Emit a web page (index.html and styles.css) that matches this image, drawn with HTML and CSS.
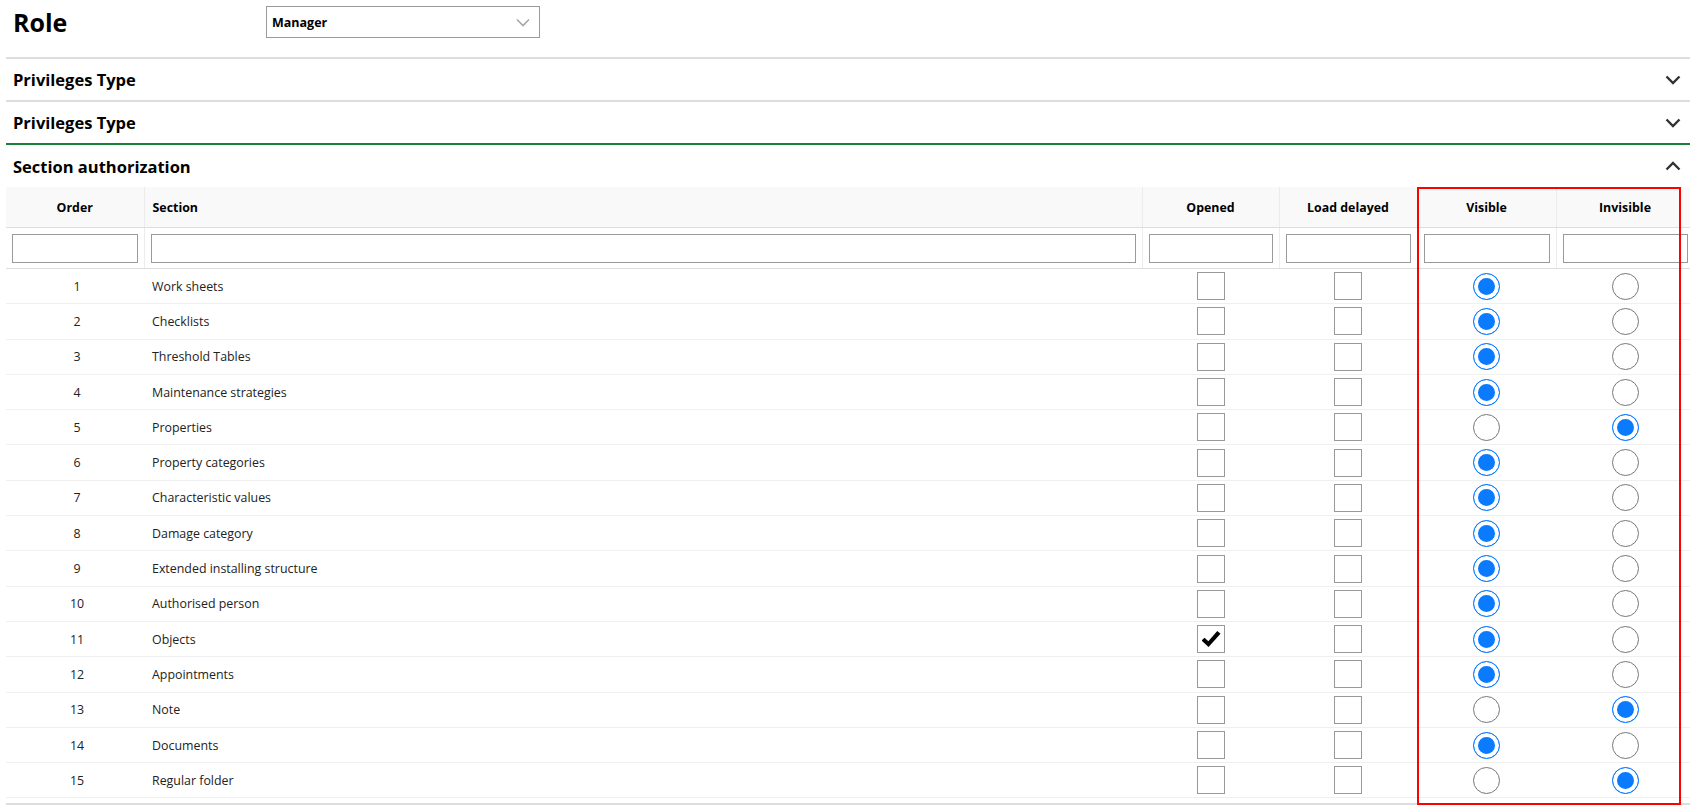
FILE: index.html
```html
<!DOCTYPE html>
<html lang="en">
<head>
    <meta charset="UTF-8">
    <meta name="viewport" content="width=device-width, initial-scale=1.0">
    <title>Role privileges</title>
    <link rel="stylesheet" href="styles.css">
</head>
<body>
<div class="page">

    <div class="role-bar">
        <h1>Role</h1>
        <div class="role-select">
            <span>Manager</span>
            <svg class="select-arrow" width="14" height="9" viewBox="0 0 14 9"><path d="M1 1.5 L7 7.5 L13 1.5" fill="none" stroke="#a6a6a6" stroke-width="1.6"/></svg>
        </div>
    </div>

    <div class="panel">
        <div class="panel-head">
            <span>Privileges Type</span>
            <svg class="chevron" width="16" height="10" viewBox="0 0 16 10"><path d="M1.5 1.5 L8 8 L14.5 1.5" fill="none" stroke="#333" stroke-width="2.4"/></svg>
        </div>
    </div>

    <div class="panel">
        <div class="panel-head">
            <span>Privileges Type</span>
            <svg class="chevron" width="16" height="10" viewBox="0 0 16 10"><path d="M1.5 1.5 L8 8 L14.5 1.5" fill="none" stroke="#333" stroke-width="2.4"/></svg>
        </div>
    </div>

    <div class="panel open">
        <div class="panel-head">
            <span>Section authorization</span>
            <svg class="chevron" width="16" height="10" viewBox="0 0 16 10"><path d="M1.5 8.5 L8 2 L14.5 8.5" fill="none" stroke="#333" stroke-width="2.4"/></svg>
        </div>

        <div class="table-wrap">
            <table class="grid">
                <colgroup>
                    <col class="col-order">
                    <col class="col-section">
                    <col class="col-opened">
                    <col class="col-delayed">
                    <col class="col-visible">
                    <col class="col-invisible">
                </colgroup>
                <thead>
                    <tr class="head-row">
                        <th>Order</th>
                        <th class="left">Section</th>
                        <th>Opened</th>
                        <th>Load delayed</th>
                        <th>Visible</th>
                        <th>Invisible</th>
                    </tr>
                    <tr class="filter-row">
                        <th><input type="text" class="filter"></th>
                        <th><input type="text" class="filter"></th>
                        <th><input type="text" class="filter"></th>
                        <th><input type="text" class="filter"></th>
                        <th><input type="text" class="filter"></th>
                        <th><input type="text" class="filter"></th>
                    </tr>
                </thead>
                <tbody>
                    <tr><td class="num">1</td><td>Work sheets</td><td><input type="checkbox"></td><td><input type="checkbox"></td><td><input type="radio" name="r1" checked></td><td><input type="radio" name="r1"></td></tr>
                    <tr><td class="num">2</td><td>Checklists</td><td><input type="checkbox"></td><td><input type="checkbox"></td><td><input type="radio" name="r2" checked></td><td><input type="radio" name="r2"></td></tr>
                    <tr><td class="num">3</td><td>Threshold Tables</td><td><input type="checkbox"></td><td><input type="checkbox"></td><td><input type="radio" name="r3" checked></td><td><input type="radio" name="r3"></td></tr>
                    <tr><td class="num">4</td><td>Maintenance strategies</td><td><input type="checkbox"></td><td><input type="checkbox"></td><td><input type="radio" name="r4" checked></td><td><input type="radio" name="r4"></td></tr>
                    <tr><td class="num">5</td><td>Properties</td><td><input type="checkbox"></td><td><input type="checkbox"></td><td><input type="radio" name="r5"></td><td><input type="radio" name="r5" checked></td></tr>
                    <tr><td class="num">6</td><td>Property categories</td><td><input type="checkbox"></td><td><input type="checkbox"></td><td><input type="radio" name="r6" checked></td><td><input type="radio" name="r6"></td></tr>
                    <tr><td class="num">7</td><td>Characteristic values</td><td><input type="checkbox"></td><td><input type="checkbox"></td><td><input type="radio" name="r7" checked></td><td><input type="radio" name="r7"></td></tr>
                    <tr><td class="num">8</td><td>Damage category</td><td><input type="checkbox"></td><td><input type="checkbox"></td><td><input type="radio" name="r8" checked></td><td><input type="radio" name="r8"></td></tr>
                    <tr><td class="num">9</td><td>Extended installing structure</td><td><input type="checkbox"></td><td><input type="checkbox"></td><td><input type="radio" name="r9" checked></td><td><input type="radio" name="r9"></td></tr>
                    <tr><td class="num">10</td><td>Authorised person</td><td><input type="checkbox"></td><td><input type="checkbox"></td><td><input type="radio" name="r10" checked></td><td><input type="radio" name="r10"></td></tr>
                    <tr><td class="num">11</td><td>Objects</td><td><input type="checkbox" checked></td><td><input type="checkbox"></td><td><input type="radio" name="r11" checked></td><td><input type="radio" name="r11"></td></tr>
                    <tr><td class="num">12</td><td>Appointments</td><td><input type="checkbox"></td><td><input type="checkbox"></td><td><input type="radio" name="r12" checked></td><td><input type="radio" name="r12"></td></tr>
                    <tr><td class="num">13</td><td>Note</td><td><input type="checkbox"></td><td><input type="checkbox"></td><td><input type="radio" name="r13"></td><td><input type="radio" name="r13" checked></td></tr>
                    <tr><td class="num">14</td><td>Documents</td><td><input type="checkbox"></td><td><input type="checkbox"></td><td><input type="radio" name="r14" checked></td><td><input type="radio" name="r14"></td></tr>
                    <tr><td class="num">15</td><td>Regular folder</td><td><input type="checkbox"></td><td><input type="checkbox"></td><td><input type="radio" name="r15"></td><td><input type="radio" name="r15" checked></td></tr>
                </tbody>
            </table>
        </div>

        <!-- markierung der sichtbarkeits-spalten -->
        <div class="highlight"></div>
    </div>

</div>
</body>
</html>
```

FILE: styles.css
```css
html, body {
    overflow: hidden;
}
body {
    margin: 0;
    font-family: "Open Sans", "Noto Sans", sans-serif;
    color: #222;
    background-color: #fff;
}
.page {
    padding-left: 6px;
}
.role-bar {
    display: flex;
    align-items: center;
    padding: 6px 0 19px;
}
.role-bar h1 {
    margin: 0;
    width: 260px;
    padding-left: 7px;
    box-sizing: border-box;
    font-size: 25px;
    line-height: 32px;
    font-weight: 700;
    color: #000;
}
.role-select {
    width: 274px;
    height: 32px;
    box-sizing: border-box;
    border: 1px solid #9a9a9a;
    display: flex;
    align-items: center;
    justify-content: space-between;
    padding: 0 9px 0 5px;
    font-size: 12.5px;
    font-weight: 700;
    color: #000;
}
.panel {
    border-top: 2px solid #ddd;
}
.panel.open {
    position: relative;
    border-top-color: #198038;
    border-bottom: 2px solid #ddd;
}
.panel-head {
    height: 41px;
    display: flex;
    align-items: center;
    justify-content: space-between;
    padding: 0 9px 0 7px;
    font-size: 16.5px;
    font-weight: 700;
    color: #000;
}
.panel.open .panel-head {
    height: 42px;
}
.table-wrap {
    overflow: hidden;
    padding-bottom: 5px;
}
.grid {
    width: 1688px;
    border-collapse: collapse;
    table-layout: fixed;
    font-size: 12.4px;
}
.col-order { width: 138px; }
.col-section { width: 998px; }
.col-opened { width: 137px; }
.col-delayed { width: 138px; }
.col-visible { width: 139px; }
.col-invisible { width: 138px; }
.grid th {
    background-color: #f9f9f9;
    font-weight: 700;
    color: #000;
    text-align: center;
    border-right: 1px solid #ececec;
    border-bottom: 1px solid #ddd;
    padding: 0 6px;
}
.grid th.left {
    text-align: left;
    padding-left: 8px;
}
.head-row th {
    height: 40px;
}
.filter-row th {
    height: 40px;
    background-color: #fff;
}
.filter {
    display: block;
    width: 100%;
    height: 29px;
    box-sizing: border-box;
    border: 1px solid #9a9a9a;
    margin: 1px 0 0;
    font-family: inherit;
}
.grid td {
    height: 34.3px;
    padding: 0 8px;
    border-bottom: 1px solid #f0f0f0;
    color: #222;
    text-align: center;
}
.grid td:nth-child(2) {
    text-align: left;
}
.grid td.num {
    padding-left: 12px;
}
.grid input[type="checkbox"],
.grid input[type="radio"] {
    appearance: none;
    -webkit-appearance: none;
    margin: 0;
    vertical-align: middle;
    box-sizing: border-box;
}
.grid input[type="checkbox"] {
    width: 28px;
    height: 28px;
    border: 1px solid #999;
    background-color: #fff;
    position: relative;
}
.grid input[type="checkbox"]:checked::before {
    content: "";
    position: absolute;
    left: 4px;
    top: 5px;
    width: 19px;
    height: 16px;
    background-color: #000;
    clip-path: polygon(0 58%, 16% 42%, 36% 64%, 83% 0, 100% 16%, 37% 100%);
}
.grid input[type="radio"] {
    width: 27px;
    height: 27px;
    border: 1px solid #777;
    border-radius: 50%;
    background-color: #fff;
}
.grid input[type="radio"]:checked {
    border-color: #0a7aff;
    background-color: #0a7aff;
    box-shadow: inset 0 0 0 4px #fff;
}
.highlight {
    position: absolute;
    left: 1411px;
    top: 42px;
    width: 264px;
    height: 618px;
    box-sizing: border-box;
    border: 2px solid #ff0000;
    pointer-events: none;
}
```
